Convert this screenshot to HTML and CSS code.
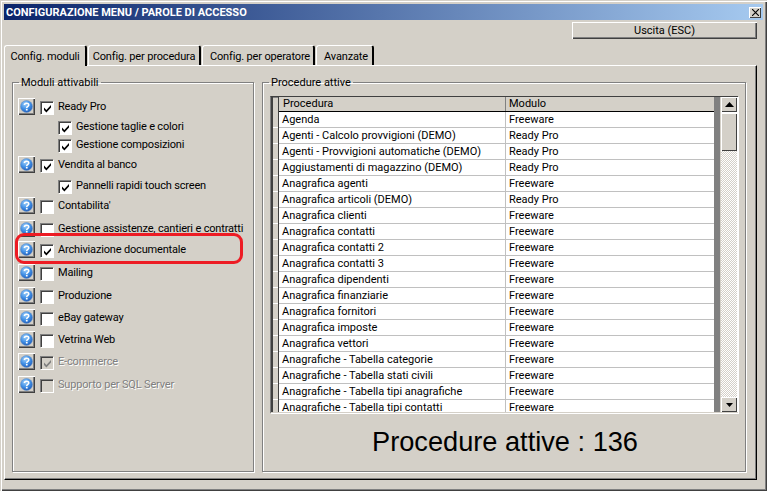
FILE: index.html
```html
<!DOCTYPE html>
<html lang="it">
<head>
<meta charset="utf-8">
<title>Configurazione menu</title>
<link rel="stylesheet" href="styles.css">
</head>
<body>
<svg class="defs" width="0" height="0" aria-hidden="true">
  <defs>
    <radialGradient id="ball" cx="40%" cy="30%" r="75%">
      <stop offset="0" stop-color="#9fd0fa"/>
      <stop offset="0.55" stop-color="#3f8fe6"/>
      <stop offset="1" stop-color="#1c57b5"/>
    </radialGradient>
    <symbol id="help" viewBox="0 0 13 13">
      <circle cx="6.5" cy="6.5" r="6" fill="url(#ball)" stroke="#6d93c4" stroke-width="0.6"/>
      <path d="M4.4 5 C4.4 2.6 8.8 2.6 8.8 5 C8.8 6.4 6.7 6.4 6.7 8" fill="none" stroke="#fff" stroke-width="1.5"/>
      <rect x="5.9" y="8.8" width="1.7" height="1.7" fill="#fff"/>
    </symbol>
    <symbol id="check" viewBox="0 0 11 11">
      <path d="M2 4.5 L4.4 7 L9 2 V4.4 L4.4 9.4 L2 6.9 Z"/>
    </symbol>
  </defs>
</svg>
<div class="window">
  <div class="titlebar">
    <span class="title">CONFIGURAZIONE MENU / PAROLE DI ACCESSO</span>
    <button class="close" aria-label="Chiudi"><svg width="7" height="7" viewBox="0 0 7 7"><path d="M0 0 L7 7 M7 0 L0 7" stroke="#000" stroke-width="1.1"/></svg></button>
  </div>
  <div class="toolbar"><button class="exit">Uscita (ESC)</button></div>
  <div class="tabs">
    <div class="tab tab-active">Config. moduli</div>
    <div class="tab tab-proc">Config. per procedura</div>
    <div class="tab tab-oper">Config. per operatore</div>
    <div class="tab tab-adv">Avanzate</div>
  </div>
  <div class="panel">
    <fieldset class="group group-left">
      <legend>Moduli attivabili</legend>
      <div class="modules">
        <div class="mod"><span class="help"><svg width="13" height="13"><use href="#help"/></svg></span><span class="cb"><svg width="11" height="11"><use href="#check"/></svg></span><span class="lbl">Ready Pro</span></div>
        <div class="mod sub"><span class="cb"><svg width="11" height="11"><use href="#check"/></svg></span><span class="lbl">Gestione taglie e colori</span></div>
        <div class="mod sub"><span class="cb"><svg width="11" height="11"><use href="#check"/></svg></span><span class="lbl">Gestione composizioni</span></div>
        <div class="mod"><span class="help"><svg width="13" height="13"><use href="#help"/></svg></span><span class="cb"><svg width="11" height="11"><use href="#check"/></svg></span><span class="lbl">Vendita al banco</span></div>
        <div class="mod sub"><span class="cb"><svg width="11" height="11"><use href="#check"/></svg></span><span class="lbl">Pannelli rapidi touch screen</span></div>
        <div class="mod"><span class="help"><svg width="13" height="13"><use href="#help"/></svg></span><span class="cb"></span><span class="lbl">Contabilita'</span></div>
        <div class="mod"><span class="help"><svg width="13" height="13"><use href="#help"/></svg></span><span class="cb"></span><span class="lbl">Gestione assistenze, cantieri e contratti</span></div>
        <div class="mod"><span class="help"><svg width="13" height="13"><use href="#help"/></svg></span><span class="cb"><svg width="11" height="11"><use href="#check"/></svg></span><span class="lbl">Archiviazione documentale</span></div>
        <div class="mod"><span class="help"><svg width="13" height="13"><use href="#help"/></svg></span><span class="cb"></span><span class="lbl">Mailing</span></div>
        <div class="mod"><span class="help"><svg width="13" height="13"><use href="#help"/></svg></span><span class="cb"></span><span class="lbl">Produzione</span></div>
        <div class="mod"><span class="help"><svg width="13" height="13"><use href="#help"/></svg></span><span class="cb"></span><span class="lbl">eBay gateway</span></div>
        <div class="mod"><span class="help"><svg width="13" height="13"><use href="#help"/></svg></span><span class="cb"></span><span class="lbl">Vetrina Web</span></div>
        <div class="mod off"><span class="help"><svg width="13" height="13"><use href="#help"/></svg></span><span class="cb"><svg width="11" height="11"><use href="#check"/></svg></span><span class="lbl">E-commerce</span></div>
        <div class="mod off"><span class="help"><svg width="13" height="13"><use href="#help"/></svg></span><span class="cb"></span><span class="lbl">Supporto per SQL Server</span></div>
      </div>
      <div class="highlight"></div>
    </fieldset>
    <fieldset class="group group-right">
      <legend>Procedure attive</legend>
      <div class="grid">
        <div class="grid-body">
          <div class="ind"><i></i><i></i><i></i><i></i><i></i><i></i><i></i><i></i><i></i><i></i><i></i><i></i><i></i><i></i><i></i><i></i><i></i><i></i><i></i></div>
          <div class="table">
            <div class="row head"><span class="c1">Procedura</span><span class="c2">Modulo</span></div>
            <div class="row"><span class="c1">Agenda</span><span class="c2">Freeware</span></div>
            <div class="row"><span class="c1">Agenti - Calcolo provvigioni (DEMO)</span><span class="c2">Ready Pro</span></div>
            <div class="row"><span class="c1">Agenti - Provvigioni automatiche (DEMO)</span><span class="c2">Ready Pro</span></div>
            <div class="row"><span class="c1">Aggiustamenti di magazzino (DEMO)</span><span class="c2">Ready Pro</span></div>
            <div class="row"><span class="c1">Anagrafica agenti</span><span class="c2">Freeware</span></div>
            <div class="row"><span class="c1">Anagrafica articoli (DEMO)</span><span class="c2">Ready Pro</span></div>
            <div class="row"><span class="c1">Anagrafica clienti</span><span class="c2">Freeware</span></div>
            <div class="row"><span class="c1">Anagrafica contatti</span><span class="c2">Freeware</span></div>
            <div class="row"><span class="c1">Anagrafica contatti 2</span><span class="c2">Freeware</span></div>
            <div class="row"><span class="c1">Anagrafica contatti 3</span><span class="c2">Freeware</span></div>
            <div class="row"><span class="c1">Anagrafica dipendenti</span><span class="c2">Freeware</span></div>
            <div class="row"><span class="c1">Anagrafica finanziarie</span><span class="c2">Freeware</span></div>
            <div class="row"><span class="c1">Anagrafica fornitori</span><span class="c2">Freeware</span></div>
            <div class="row"><span class="c1">Anagrafica imposte</span><span class="c2">Freeware</span></div>
            <div class="row"><span class="c1">Anagrafica vettori</span><span class="c2">Freeware</span></div>
            <div class="row"><span class="c1">Anagrafiche - Tabella categorie</span><span class="c2">Freeware</span></div>
            <div class="row"><span class="c1">Anagrafiche - Tabella stati civili</span><span class="c2">Freeware</span></div>
            <div class="row"><span class="c1">Anagrafiche - Tabella tipi anagrafiche</span><span class="c2">Freeware</span></div>
            <div class="row"><span class="c1">Anagrafiche - Tabella tipi contatti</span><span class="c2">Freeware</span></div>
          </div>
          <div class="strip"></div>
          <div class="scrollbar">
            <span class="sb-btn"><svg width="9" height="5"><path d="M4.5 0 L9 5 H0 Z"/></svg></span>
            <span class="sb-thumb"></span>
            <span class="sb-track"></span>
            <span class="sb-btn"><svg width="7" height="4"><path d="M0 0 H7 L3.5 4 Z"/></svg></span>
          </div>
        </div>
      </div>
      <div class="total">Procedure attive : 136</div>
    </fieldset>
  </div>
</div>
</body>
</html>
```
FILE: styles.css
```css
* { box-sizing: border-box; }
html, body { margin: 0; padding: 0; }
body { width: 767px; height: 491px; overflow: hidden; background: #d4d0c8; font-family: Roboto, "Liberation Sans", Arial, sans-serif; font-size: 11px; color: #000; }
.defs { position: absolute; }
.window { width: 767px; height: 491px; padding: 4px 4px 3px 4px; background: #d4d0c8; display: flex; flex-direction: column; box-shadow: inset 1px 1px 0 #d4d0c8, inset 2px 2px 0 #fff, inset -1px -1px 0 #404040, inset -2px -2px 0 #808080; }
.titlebar { height: 16px; flex: none; display: flex; align-items: center; justify-content: space-between; padding: 0 2px; background: linear-gradient(90deg, #0a246a, #a6caf0); }
.title { color: #fff; font-weight: bold; font-size: 11px; }
.close { width: 12px; height: 11px; padding: 0; display: flex; align-items: center; justify-content: center; background: #d4d0c8; border: 0; box-shadow: inset 1px 1px 0 #fff, inset -1px -1px 0 #404040; }
.toolbar { flex: none; height: 25px; display: flex; justify-content: flex-end; padding: 2px 6px 0 0; }
.exit { width: 185px; height: 17px; padding: 0; font: inherit; color: #000; background: #d4d0c8; border: 0; box-shadow: inset 1px 1px 0 #fff, inset -1px -1px 0 #404040, inset -2px -2px 0 #808080; }
.tabs { flex: none; height: 20px; display: flex; gap: 1px; letter-spacing: -0.15px; }
.tab { height: 20px; padding-top: 4px; text-align: center; border-top: 1px solid #fff; border-left: 1px solid #fff; border-right: 2px solid #000; border-radius: 3px 3px 0 0; }
.tab-active { width: 83px; height: 21px; position: relative; z-index: 1; background: #d4d0c8; padding-top: 4px; }
.tab-proc { width: 113px; }
.tab-oper { width: 113px; padding-left: 4px; }
.tab-adv { width: 58px; padding-left: 3px; }
.panel { flex: none; width: 753px; height: 415px; padding: 10px 0 0 7px; display: flex; gap: 8px; border-top: 1px solid #fff; border-left: 1px solid #fff; border-right: 1px solid #000; border-bottom: 1px solid #000; box-shadow: inset -1px -1px 0 #808080; }
.group { position: relative; margin: 0; padding: 0; min-width: 0; height: 396px; border: 1px solid #808080; box-shadow: inset 1px 1px 0 #fff, 1px 1px 0 #fff; }
.group legend { margin-left: 6px; padding: 0 2px; line-height: 13px; }
.group-left { width: 242px; }
.group-right { width: 484px; padding: 0 7px; }
.group-right legend { margin-left: -1px; }
.modules { display: grid; grid-template-rows: 20px 18px 20px 21px 20px 23px 21px 23px 23px 22px 22px 22px 23px 20px; align-items: start; padding: 9px 0 0 5px; }
.mod { display: flex; align-items: center; height: 17px; }
.sub { padding-left: 40px; }
.help { width: 17px; height: 17px; flex: none; margin-right: 5px; display: flex; align-items: center; justify-content: center; background: #d4d0c8; box-shadow: inset 1px 1px 0 #fff, inset -1px -1px 0 #404040, inset -2px -2px 0 #808080; }
.cb { width: 13px; height: 13px; flex: none; margin: 2px 5px 0 0; display: flex; align-items: center; justify-content: center; background: #fff; border-top: 1px solid #808080; border-left: 1px solid #808080; box-shadow: inset 1px 1px 0 #404040, 1px 1px 0 #fff; }
.cb svg { fill: #000; }
.lbl { white-space: nowrap; letter-spacing: -0.17px; }
.off .lbl { color: #808080; text-shadow: 1px 1px 0 #fff; }
.off .cb { background: #d4d0c8; }
.off .cb svg { fill: #808080; }
.highlight { position: absolute; left: 2px; top: 144px; width: 228px; height: 31px; border: 3px solid #ed1c24; border-radius: 9px; }
.grid { height: 317px; margin-top: 7px; border-top: 1px solid #404040; border-left: 1px solid #808080; box-shadow: 1px 1px 0 #fff, inset 0 1px 0 #808080; overflow: hidden; background: #d4d0c8; }
.grid-body { display: flex; height: 315px; }
.ind { width: 7px; flex: none; overflow: hidden; border-left: 2px solid #404040; padding-top: 15px; }
.ind i { display: block; height: 16px; background: #d4d0c8; box-shadow: inset 0 -1px 0 #fff; }
.table { width: 436px; flex: none; overflow: hidden; border-left: 1px solid #404040; background: #fff; }
.row { display: flex; height: 16px; line-height: 15px; border-bottom: 1px solid #c0c0c0; white-space: nowrap; }
.row .c1 { width: 227px; padding-left: 3px; border-right: 1px solid #c0c0c0; overflow: hidden; }
.row .c2 { flex: 1; padding-left: 3px; }
.head { background: #d4d0c8; height: 15px; border-bottom: 1px solid #000; line-height: 14px; }
.head .c1 { padding-left: 4px; border-right: 1px solid #808080; }
.strip { width: 6px; flex: none; background: #808080; }
.scrollbar { width: 18px; flex: none; display: flex; flex-direction: column; padding-right: 1px; background: #fff; border-left: 1px solid #d4d0c8; }
.sb-btn { height: 15px; flex: none; display: flex; align-items: center; justify-content: center; background: #d4d0c8; box-shadow: inset 1px 1px 0 #fff, inset -1px -1px 0 #404040; }
.sb-thumb { height: 38px; flex: none; margin-top: 1px; background: #d4d0c8; box-shadow: inset 1px 1px 0 #fff, inset -1px -1px 0 #404040; }
.sb-track { flex: 1; background: repeating-conic-gradient(#d4d0c8 0 25%, #fff 0 50%) 0 0 / 2px 2px; }
.total { margin-top: 11px; padding-left: 102px; font-family: "Liberation Sans", Arial, sans-serif; font-size: 27.2px; line-height: 35px; white-space: nowrap; }
```
